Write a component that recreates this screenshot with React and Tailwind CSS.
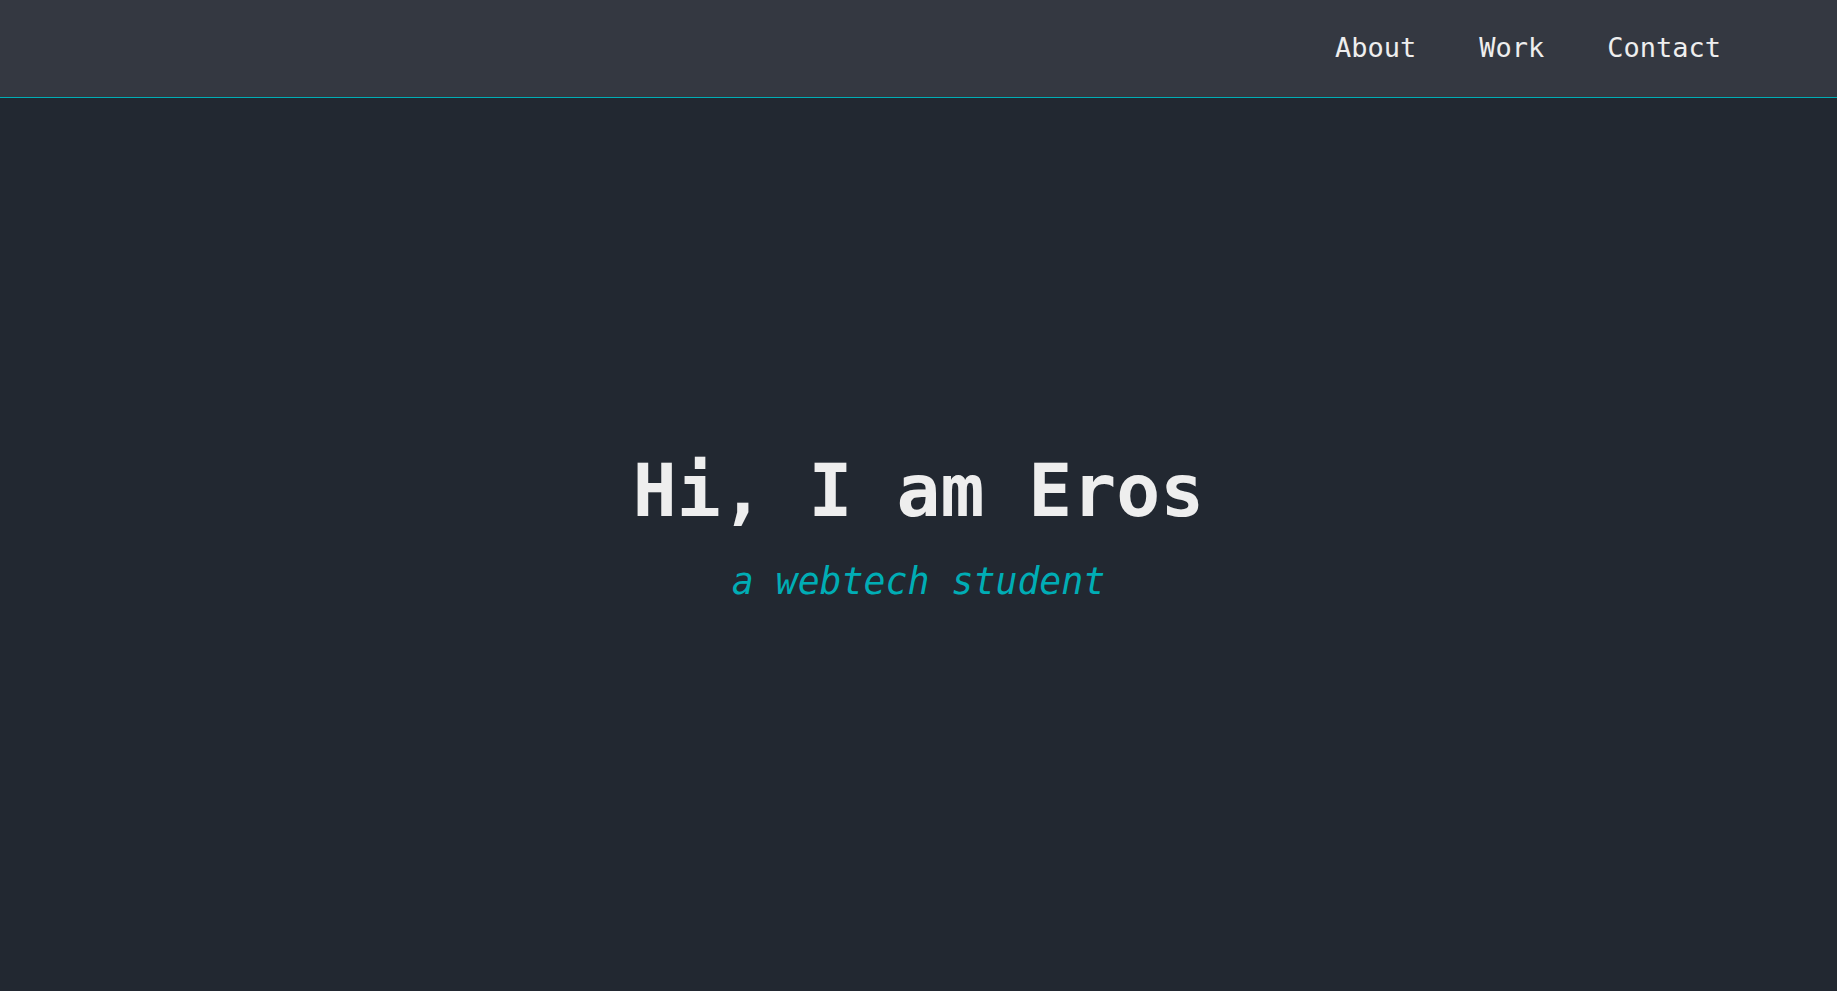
import React from "react";

const links = ["About", "Work", "Contact"];

const App = () => {
  return (
    <div className="min-h-screen flex flex-col bg-[#222831] font-['DejaVu_Sans_Mono',monospace] text-[#eeeeee]">
      <header className="h-[98px] flex items-center justify-end pr-[116px] bg-[#343841] border-b border-[#00adb5]">
        <nav className="flex items-center gap-[63px] pb-[2px]">
          {links.map((l) => (
            <a key={l} href="#" className="text-[27px] leading-none">
              {l}
            </a>
          ))}
        </nav>
      </header>

      <main className="flex-1 flex flex-col items-center justify-center pb-[34px]">
        <h1 className="text-[73px] font-bold leading-none">Hi, I am Eros</h1>
        <p className="mt-[37px] text-[36.5px] italic leading-none text-[#00adb5]">a webtech student</p>
      </main>
    </div>
  );
};

export default App;
